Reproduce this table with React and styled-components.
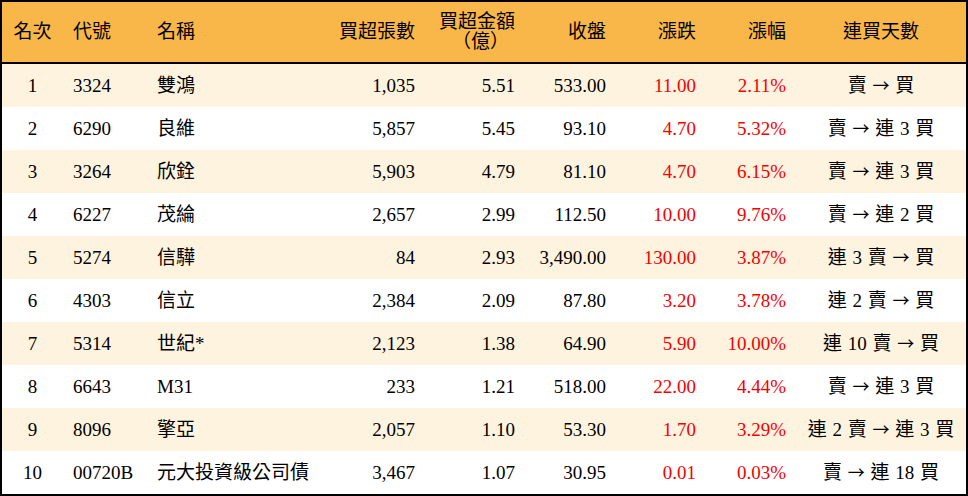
import React from "react";
import styled, { createGlobalStyle } from "styled-components";

const Global = createGlobalStyle`
  html, body { margin: 0; padding: 0; background: #fff; }
  body { font-family: "Liberation Serif", "Noto Sans CJK TC", serif; }
`;

const COLS = "61px 84px 178px 100px 100px 91px 90px 90px 170px";

const Table = styled.div`
  width: 968px;
  height: 496px;
  box-sizing: border-box;
  border: 2px solid #000;
  display: flex;
  flex-direction: column;
  color: #000;
  font-size: 19px;
`;

const Header = styled.div`
  display: grid;
  grid-template-columns: ${COLS};
  height: 60px;
  background: #f9b749;
  border-bottom: 2px solid #000;
  align-items: center;
`;

const Row = styled.div`
  display: grid;
  grid-template-columns: ${COLS};
  height: 43px;
  align-items: center;
  background: ${(p) => (p.$alt ? "#fef3df" : "#ffffff")};
`;

const Cell = styled.div`
  padding: 0 10px;
  text-align: ${(p) => p.$align || "left"};
  color: ${(p) => (p.$red ? "#f50000" : "#000")};
  white-space: nowrap;
  line-height: 22px;
`;

const HeadCell = styled(Cell)`
  line-height: 20px;
`;

const HeadLine = styled.span`
  display: block;
  margin-right: ${(p) => p.$shift || 0}px;
`;

const Streak = styled(Cell)`
  word-spacing: 1px;
`;

const Arrow = styled.span`
  font-family: "Noto Sans CJK TC", sans-serif;
  font-size: 17px;
`;

const data = [
  ["1", "3324", "雙鴻", "1,035", "5.51", "533.00", "11.00", "2.11%", "賣 → 買"],
  ["2", "6290", "良維", "5,857", "5.45", "93.10", "4.70", "5.32%", "賣 → 連 3 買"],
  ["3", "3264", "欣銓", "5,903", "4.79", "81.10", "4.70", "6.15%", "賣 → 連 3 買"],
  ["4", "6227", "茂綸", "2,657", "2.99", "112.50", "10.00", "9.76%", "賣 → 連 2 買"],
  ["5", "5274", "信驊", "84", "2.93", "3,490.00", "130.00", "3.87%", "連 3 賣 → 買"],
  ["6", "4303", "信立", "2,384", "2.09", "87.80", "3.20", "3.78%", "連 2 賣 → 買"],
  ["7", "5314", "世紀*", "2,123", "1.38", "64.90", "5.90", "10.00%", "連 10 賣 → 買"],
  ["8", "6643", "M31", "233", "1.21", "518.00", "22.00", "4.44%", "賣 → 連 3 買"],
  ["9", "8096", "擎亞", "2,057", "1.10", "53.30", "1.70", "3.29%", "連 2 賣 → 連 3 買"],
  ["10", "00720B", "元大投資級公司債", "3,467", "1.07", "30.95", "0.01", "0.03%", "賣 → 連 18 買"],
];

function StreakText({ text }) {
  const [a, b] = text.split(" → ");
  return (
    <>
      {a} <Arrow>→</Arrow> {b}
    </>
  );
}

export default function App() {
  return (
    <>
      <Global />
      <Table>
        <Header>
          <HeadCell $align="center">名次</HeadCell>
          <HeadCell>代號</HeadCell>
          <HeadCell>名稱</HeadCell>
          <HeadCell $align="right">買超張數</HeadCell>
          <HeadCell $align="right">
            <HeadLine>買超金額</HeadLine>
            <HeadLine $shift={6}>（億）</HeadLine>
          </HeadCell>
          <HeadCell $align="right">收盤</HeadCell>
          <HeadCell $align="right">漲跌</HeadCell>
          <HeadCell $align="right">漲幅</HeadCell>
          <HeadCell $align="center">連買天數</HeadCell>
        </Header>
        {data.map((r, i) => (
          <Row key={r[0]} $alt={i % 2 === 0}>
            <Cell $align="center">{r[0]}</Cell>
            <Cell>{r[1]}</Cell>
            <Cell>{r[2]}</Cell>
            <Cell $align="right">{r[3]}</Cell>
            <Cell $align="right">{r[4]}</Cell>
            <Cell $align="right">{r[5]}</Cell>
            <Cell $align="right" $red>{r[6]}</Cell>
            <Cell $align="right" $red>{r[7]}</Cell>
            <Streak $align="center">
              <StreakText text={r[8]} />
            </Streak>
          </Row>
        ))}
      </Table>
    </>
  );
}
